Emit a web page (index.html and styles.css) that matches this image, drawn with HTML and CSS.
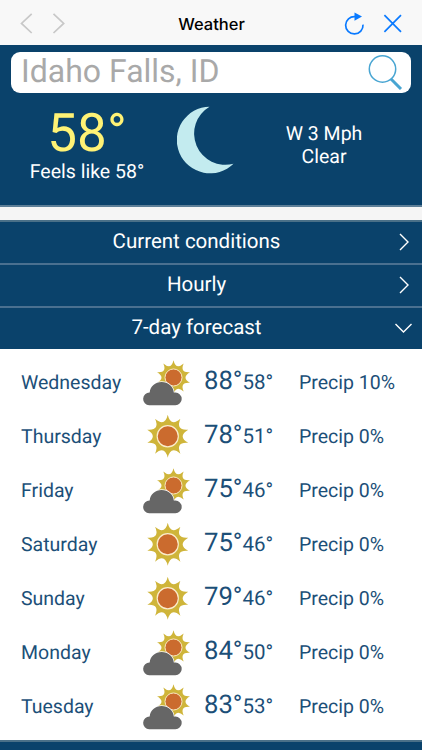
FILE: index.html
```html
<!DOCTYPE html>
<html lang="en">
<head>
    <meta charset="UTF-8">
    <meta name="viewport" content="width=device-width, initial-scale=1.0">
    <title>Weather</title>
    <link rel="stylesheet" href="styles.css">
</head>
<body>
    <!-- shared weather icons -->
    <svg class="defs" width="0" height="0">
        <symbol id="sun" viewBox="-22 -22 44 44">
            <path fill="#cfb53a" d="M0-21.8Q2.94-9 12.8-17.6Q7.69-5.6 20.7-6.7Q9.5 0 20.7 6.7Q7.69 5.6 12.8 17.6Q2.94 9 0 21.8Q-2.94 9-12.8 17.6Q-7.69 5.6-20.7 6.7Q-9.5 0-20.7-6.7Q-7.69-5.6-12.8-17.6Q-2.94-9 0-21.8Z"/>
            <circle r="10.7" fill="#cb6b2e" stroke="#fbeccb" stroke-width="1.2"/>
        </symbol>
        <symbol id="cloudy" viewBox="0 0 50 48">
            <use href="#sun" x="14" y="2" width="35" height="35"/>
            <path class="cloud" d="M7.2 47.2A6.3 6.3 0 0 1 7.7 34.6C8.1 28.3 13.3 24 19.6 24C26 24 31.4 28.4 31.8 34.6H33.4A6.3 6.3 0 0 1 33.4 47.2Z"/>
        </symbol>
    </svg>

    <div class="navbar">
        <svg class="nav-arrows" width="60" height="24" viewBox="0 0 60 24">
            <path d="M11.7 1.8L1.5 11.4L11.7 21M33.5 1.8L43.7 11.4L33.5 21"/>
        </svg>
        <div class="title">Weather</div>
        <svg class="nav-btns" width="60" height="24" viewBox="0 0 60 24">
            <path d="M12 4.6A8.7 8.7 0 1 0 20 12.6"/>
            <path class="head" d="M11.5 .5L19 4.6L11.5 8.7Z"/>
            <path d="M41.4 3.2L58 19.8M58 3.2L41.4 19.8"/>
        </svg>
    </div>

    <div class="summary">
        <div class="search">
            <span>Idaho Falls, ID</span>
            <svg width="36" height="38" viewBox="0 0 36 38">
                <circle cx="15.5" cy="17" r="13.2"/>
                <path d="M24 27L34 37"/>
            </svg>
        </div>
        <div class="now">
            <div class="temp">
                <div class="degree">58°</div>
                <div class="feels">Feels like 58°</div>
            </div>
            <svg class="moon" width="58" height="68" viewBox="0 0 58 68">
                <path d="M32.5 .7A33.3 33.3 0 1 0 56.5 57.7A31.2 31.2 0 0 1 32.5 .7Z"/>
            </svg>
            <div class="wind">W 3 Mph<br>Clear</div>
        </div>
    </div>

    <div class="menu">
        <div class="item">Current conditions
            <svg class="arrow" width="18" height="18" viewBox="0 0 18 18"><path d="M5 1L13 9L5 17"/></svg>
        </div>
        <div class="item">Hourly
            <svg class="arrow" width="18" height="18" viewBox="0 0 18 18"><path d="M5 1L13 9L5 17"/></svg>
        </div>
        <div class="item">7-day forecast
            <svg class="arrow" width="18" height="18" viewBox="0 0 18 18"><path d="M.5 5L8.5 13L16.5 5"/></svg>
        </div>
    </div>

    <div class="forecast">
        <div class="day">
            <div class="name">Wednesday</div>
            <svg class="icon"><use href="#cloudy"/></svg>
            <div class="temps"><span class="high">88°</span><span class="low">58°</span></div>
            <div class="precip">Precip 10%</div>
        </div>
        <div class="day">
            <div class="name">Thursday</div>
            <svg class="icon"><use href="#sun" x="4" y="2.5" width="43.5" height="43.5"/></svg>
            <div class="temps"><span class="high">78°</span><span class="low">51°</span></div>
            <div class="precip">Precip 0%</div>
        </div>
        <div class="day">
            <div class="name">Friday</div>
            <svg class="icon"><use href="#cloudy"/></svg>
            <div class="temps"><span class="high">75°</span><span class="low">46°</span></div>
            <div class="precip">Precip 0%</div>
        </div>
        <div class="day">
            <div class="name">Saturday</div>
            <svg class="icon"><use href="#sun" x="4" y="2.5" width="43.5" height="43.5"/></svg>
            <div class="temps"><span class="high">75°</span><span class="low">46°</span></div>
            <div class="precip">Precip 0%</div>
        </div>
        <div class="day">
            <div class="name">Sunday</div>
            <svg class="icon"><use href="#sun" x="4" y="2.5" width="43.5" height="43.5"/></svg>
            <div class="temps"><span class="high">79°</span><span class="low">46°</span></div>
            <div class="precip">Precip 0%</div>
        </div>
        <div class="day">
            <div class="name">Monday</div>
            <svg class="icon"><use href="#cloudy"/></svg>
            <div class="temps"><span class="high">84°</span><span class="low">50°</span></div>
            <div class="precip">Precip 0%</div>
        </div>
        <div class="day">
            <div class="name">Tuesday</div>
            <svg class="icon"><use href="#cloudy"/></svg>
            <div class="temps"><span class="high">83°</span><span class="low">53°</span></div>
            <div class="precip">Precip 0%</div>
        </div>
    </div>
    <div class="footer"></div>
</body>
</html>
```
FILE: styles.css
```css
* {
    margin: 0;
    padding: 0;
    box-sizing: border-box;
}

html,
body {
    width: 100%;
    height: 100%;
    overflow: hidden;
}

body {
    display: flex;
    flex-direction: column;
    background: #f5f5f5;
    font-family: Roboto, sans-serif;
    font-size: 19.5px;
    text-rendering: geometricPrecision;
}

.defs {
    position: absolute;
}

svg {
    flex: none;
}

.navbar {
    display: flex;
    flex: none;
    justify-content: space-between;
    align-items: center;
    height: 45px;
    padding: 2px 19px 0 20px;
    background: #f8f8f8;
}

.navbar svg {
    fill: none;
    stroke-width: 1.7;
}

.nav-arrows {
    stroke: #c8c8c8;
}

.nav-btns {
    stroke: #0a7aff;
}

.nav-btns .head {
    fill: #0a7aff;
    stroke: none;
}

.title {
    font-family: Inter, "Liberation Sans", sans-serif;
    font-size: 16.5px;
    font-weight: 500;
    color: #000;
}

.summary {
    flex: none;
    height: 162px;
    padding: 7px 11px 0;
    background: #0a426b;
    border-bottom: 2px solid #5d7f98;
}

.search {
    display: flex;
    justify-content: space-between;
    height: 41px;
    padding: 0 8px 0 10px;
    border-radius: 9px;
    background: #fff;
    font-size: 32px;
    line-height: 38px;
    color: #a9a9a9;
}

.search svg {
    fill: none;
    stroke: #48a5d2;
    stroke-width: 1.5;
}

.search path {
    stroke-width: 3;
}

.now {
    display: flex;
    margin-top: 13px;
    color: #fff;
}

.temp {
    width: 152px;
    text-align: center;
}

.degree {
    height: 53px;
    font-size: 53px;
    line-height: 55px;
    color: #fff275;
}

.feels {
    line-height: 25px;
}

.moon {
    margin-left: 14px;
    fill: #c3ebef;
}

.wind {
    width: 120px;
    margin: 16px 0 0 29px;
    text-align: center;
    line-height: 23px;
}

.menu {
    flex: none;
    margin-top: 13px;
    border-top: 2px solid #4a7088;
    background: #0a426b;
    font-size: 20.5px;
    color: #fff;
}

.item {
    position: relative;
    height: 43px;
    padding-right: 29px;
    border-bottom: 2px solid #4a7090;
    text-align: center;
    line-height: 41px;
}

.item:last-child {
    height: 41px;
    border-bottom: none;
}

.arrow {
    position: absolute;
    top: 11px;
    right: 9px;
    fill: none;
    stroke: #fff;
    stroke-width: 1.4;
}

.forecast {
    flex: none;
    height: 391px;
    padding: 6px 0 7px 21px;
    background: #fff;
    color: #1c4f78;
}

.day {
    display: flex;
    align-items: center;
    height: 54px;
}

.name {
    width: 121px;
}

.icon {
    width: 50px;
    height: 48px;
}

.cloud {
    fill: #666;
    stroke: #fff;
    stroke-width: 1.5;
    paint-order: stroke;
}

.temps {
    display: flex;
    align-items: baseline;
    width: 95px;
    margin-left: 12px;
    padding-bottom: 3px;
}

.high {
    font-size: 25.7px;
}

.low {
    font-size: 20.5px;
}

.footer {
    flex: 1;
    border-top: 2px solid #4a7088;
    background: #0a426b;
}
```
